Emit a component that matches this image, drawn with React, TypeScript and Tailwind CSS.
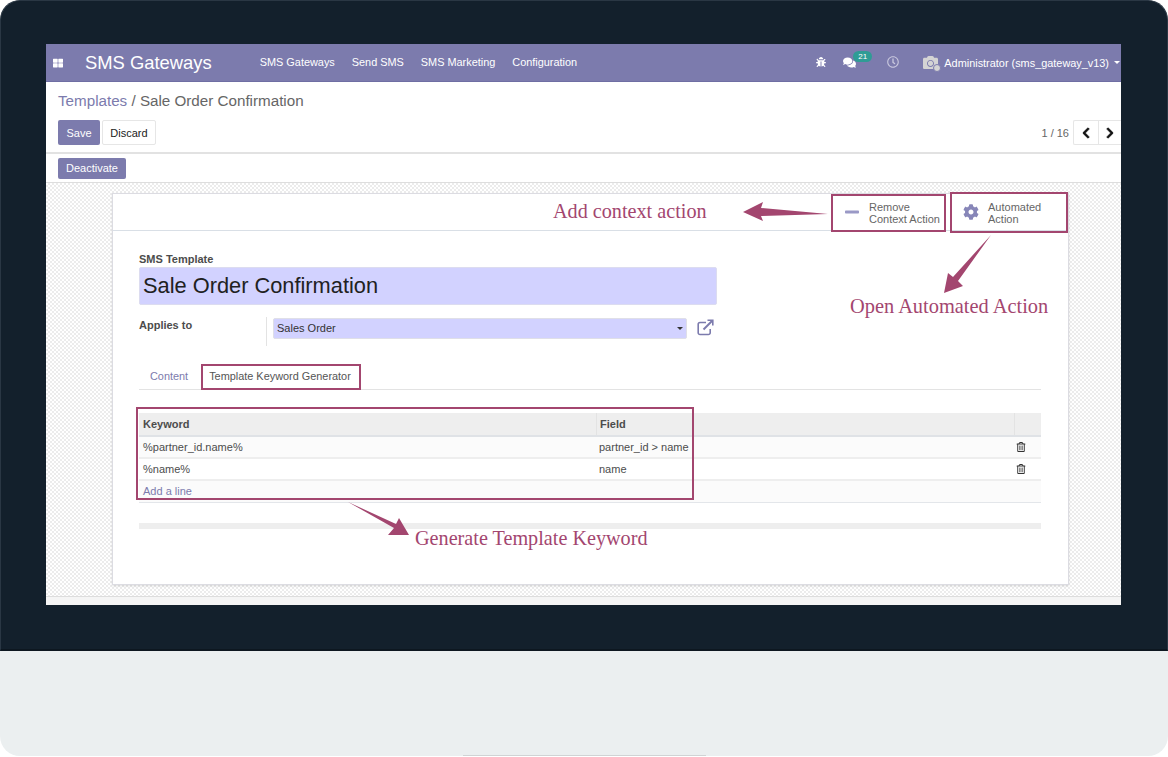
import type { ReactNode } from "react";
import {
  FaBug,
  FaCamera,
  FaChevronLeft,
  FaChevronRight,
  FaCog,
  FaComments,
  FaMinus,
  FaRegClock,
  FaRegTrashAlt,
  FaThLarge,
} from "react-icons/fa";

const menus = ["SMS Gateways", "Send SMS", "SMS Marketing", "Configuration"];

function Navbar() {
  return (
    <header className="flex h-[38px] shrink-0 items-center border-b border-[#6f6ea3] bg-[#7c7bad] text-white">
      <FaThLarge className="ml-[7px] h-[10px] w-[10px]" />
      <span className="ml-[22px] pt-[2px] text-[18.4px] leading-none">SMS Gateways</span>
      <nav className="ml-[48px] flex gap-[17px] text-[10.9px]">
        {menus.map((m) => (
          <span key={m}>{m}</span>
        ))}
      </nav>
      <div className="ml-auto flex items-center">
        <FaBug className="h-[10px] w-[10px]" />
        <div className="relative ml-[17px] mr-[22px]">
          <FaComments className="h-[13px] w-[13px]" />
          <span className="absolute left-[10px] top-[-5px] rounded-full bg-[#2f9c95] px-[5px] text-[8px] leading-[11px]">
            21
          </span>
        </div>
        <FaRegClock className="ml-[9px] h-[12px] w-[12px] text-[#c9c8de]" />
        <div className="relative ml-[23px]">
          <FaCamera className="h-[15px] w-[17px] text-[#d4d4d4]" />
          <span className="absolute bottom-[-2px] right-[-2px] h-[8px] w-[8px] rounded-full border border-[#7c7bad] bg-[#d4d4d4]" />
        </div>
        <span className="ml-[5px] pt-[1px] text-[10.9px]">Administrator (sms_gateway_v13)</span>
        <span className="ml-[5px] mr-[1px] h-0 w-0 border-x-[3px] border-t-[3px] border-x-transparent border-t-white" />
      </div>
    </header>
  );
}

function ControlPanel() {
  return (
    <div className="shrink-0 bg-white">
      <div className="h-[72px] border-b-2 border-[#e2e2e2] pl-[12px]">
        <div className="pt-[9px] text-[15.2px] leading-[20px] text-[#666666]">
          <span className="text-[#7c7bad]">Templates</span> / Sale Order Confirmation
        </div>
        <div className="mt-[9px] flex items-center">
          <button className="h-[25px] w-[42px] rounded-[2px] bg-[#7c7bad] pt-[1px] text-[11px] text-white">Save</button>
          <button className="ml-[2px] h-[25px] w-[54px] rounded-[2px] border border-[#e6e6e6] bg-white pt-[1px] text-[11px] text-[#222222]">
            Discard
          </button>
          <span className="ml-auto pl-[1px] pt-[1px] text-[11px] text-[#666666]">1 / 16</span>
          <div className="ml-[4px] flex h-[25px] rounded-l-[2px] border border-r-0 border-[#e6e6e6]">
            <span className="flex w-[25px] items-center justify-center border-r border-[#e6e6e6]">
              <FaChevronLeft strokeWidth={30} className="h-[12px] w-[12px] text-[#111111]" />
            </span>
            <span className="flex w-[22px] items-center justify-center">
              <FaChevronRight strokeWidth={30} className="h-[12px] w-[12px] text-[#111111]" />
            </span>
          </div>
        </div>
      </div>
      <div className="flex h-[29px] items-center border-b border-[#dddddd] pl-[12px]">
        <button className="h-[21px] w-[68px] rounded-[2px] bg-[#7c7bad] text-[11px] text-white">Deactivate</button>
      </div>
    </div>
  );
}

function SmartButton({ icon, lines, className }: { icon: ReactNode; lines: string[]; className: string }) {
  return (
    <div className={"flex h-full items-center " + className}>
      {icon}
      <div className="pt-[2px] text-[11px] leading-[12.5px] text-[#666666]">
        {lines.map((l) => (
          <div key={l}>{l}</div>
        ))}
      </div>
    </div>
  );
}

const rows = [
  { keyword: "%partner_id.name%", field: "partner_id > name", bg: "bg-[#fbfbfb]" },
  { keyword: "%name%", field: "name", bg: "bg-white" },
];

function KeywordTable() {
  return (
    <div className="mt-[23px] text-[11px] text-[#4c4c4c]">
      <div className="flex h-[24px] items-center border-b-2 border-[#dfe2e6] bg-[#eeeeee] font-bold">
        <span className="w-[458px] self-stretch border-r border-[#e3e3e3] pl-[4px] leading-[22px]">Keyword</span>
        <span className="flex-1 self-stretch pl-[3px] leading-[22px]">Field</span>
        <span className="w-[27px] self-stretch border-l border-[#e3e3e3]" />
      </div>
      {rows.map((r) => (
        <div key={r.keyword} className={"flex h-[22px] items-center border-b-2 border-[#eeeeee] " + r.bg}>
          <span className="w-[460px] pl-[4px]">{r.keyword}</span>
          <span className="flex-1">{r.field}</span>
          <span className="flex w-[27px] pl-[2px]">
            <FaRegTrashAlt className="h-[10px] w-[10px] text-[#333333]" />
          </span>
        </div>
      ))}
      <div className="flex h-[22px] items-center border-b border-[#e3e6ea] bg-[#fbfbfb] pl-[4px] text-[#7c7bad]">
        Add a line
      </div>
      <div className="mt-[20px] h-[6px] bg-[#eeeeee]" />
    </div>
  );
}

function ExternalLink() {
  return (
    <svg className="ml-[10px] mt-[2px] h-[17px] w-[17px] text-[#7c7bad]" viewBox="0 0 17 17" fill="none" stroke="currentColor" strokeWidth="1.6">
      <path d="M9 3.5H3A1.8 1.8 0 0 0 1.2 5.3v8.4A1.8 1.8 0 0 0 3 15.5h8.4a1.8 1.8 0 0 0 1.8-1.8V10" />
      <path d="M6.5 10.5L15 2" strokeWidth="1.9" />
      <path d="M10.5 1.2h5.3v5.3" strokeWidth="1.6" />
    </svg>
  );
}

function Sheet() {
  return (
    <div className="h-[392px] w-[957px] border border-[#dcdce2] bg-white shadow-[0_1px_2px_rgba(0,0,0,0.12)]">
      <div className="flex h-[37px] justify-end border-b border-[#d9dfe6] pr-[3px]">
        <SmartButton
          className="w-[119px] pl-[14px]"
          icon={<FaMinus className="mr-[9px] h-[16px] w-[16px] text-[#9a99c6]" />}
          lines={["Remove", "Context Action"]}
        />
        <SmartButton
          className="w-[116px] pl-[14px]"
          icon={<FaCog className="mr-[9px] h-[16px] w-[16px] text-[#8786b8]" />}
          lines={["Automated", "Action"]}
        />
      </div>
      <div className="pl-[26px] pr-[27px]">
        <div className="pt-[22px] text-[11px] font-bold leading-[13px] text-[#4c4c4c]">SMS Template</div>
        <div className="mt-[1px] flex h-[38px] w-[578px] items-center rounded-[2px] border border-[#dcdcf0] bg-[#d2d2ff] pl-[3px] text-[21.8px] text-[#212121]">
          Sale Order Confirmation
        </div>
        <div className="mt-[12px] flex h-[29px]">
          <span className="w-[127px] pt-[2px] text-[11px] font-bold leading-[13px] text-[#4c4c4c]">Applies to</span>
          <div className="flex border-l border-[#e3e3e3] pl-[6px]">
            <div className="mt-[1px] flex h-[21px] w-[414px] items-center rounded-[2px] border border-[#dfdfe8] bg-[#d2d2ff] pl-[3px] text-[11px] text-[#333333]">
              Sales Order
              <span className="ml-auto mr-[3px] h-0 w-0 border-x-[3px] border-t-[3px] border-x-transparent border-t-[#333333]" />
            </div>
            <ExternalLink />
          </div>
        </div>
        <div className="mt-[17px] flex h-[27px] items-center border-b border-[#e3e3e3] text-[10.9px]">
          <span className="ml-[11px] text-[#7c7bad]">Content</span>
          <span className="ml-[21px] text-[#555555]">Template Keyword Generator</span>
        </div>
        <KeywordTable />
      </div>
    </div>
  );
}

function Annotations() {
  const wine = "#a3466f";
  return (
    <>
      <div className="absolute left-[831px] top-[194px] h-[38px] w-[115px] border-2 border-[#a3466f]" />
      <div className="absolute left-[950px] top-[192px] h-[41px] w-[118px] border-2 border-[#a3466f]" />
      <div className="absolute left-[201px] top-[364px] h-[26px] w-[160px] border-2 border-[#a3466f]" />
      <div className="absolute left-[136px] top-[407px] h-[93px] w-[558px] border-2 border-[#a3466f]" />
      <svg className="absolute left-0 top-0 h-[757px] w-[1168px]" viewBox="0 0 1168 757">
        <path d="M828 214 L761 208 L763 202 L743 212 L763 221 L761 216 Z" fill={wine} />
        <path d="M991 235 L953 277 L948 273 L944 293 L963 286 L958 281 Z" fill={wine} />
        <path d="M348 502 L394 528 L388 535 L409 535 L399 518 L396 524 Z" fill={wine} />
      </svg>
      <span className="absolute left-[553px] top-[199px] font-['Liberation_Serif',serif] text-[20.2px] leading-[24px] text-[#a3466f]">
        Add context action
      </span>
      <span className="absolute left-[850px] top-[294px] font-['Liberation_Serif',serif] text-[20.4px] leading-[24px] text-[#a3466f]">
        Open Automated Action
      </span>
      <span className="absolute left-[415px] top-[526px] font-['Liberation_Serif',serif] text-[20.2px] leading-[24px] text-[#a3466f]">
        Generate Template Keyword
      </span>
    </>
  );
}

export default function App() {
  return (
    <div className="relative h-[757px] w-[1168px] overflow-hidden bg-white font-['Liberation_Sans',Arial,sans-serif]">
      <div className="h-[651px] rounded-t-[20px] border-x border-t border-[#2a3744] border-b-2 border-b-[#0d1720] bg-[#13202c] pl-[45px] pt-[43px]">
        <div className="flex h-[561px] w-[1075px] flex-col bg-white">
          <Navbar />
          <ControlPanel />
          <div className="flex-1 bg-[repeating-conic-gradient(#ececec_0_25%,#ffffff_0_50%)] bg-[length:4px_4px] pl-[66px] pt-[10px]">
            <Sheet />
          </div>
          <div className="h-[9px] shrink-0 border-t border-[#dddddd] bg-[#f5f5f5]" />
        </div>
      </div>
      <div className="relative h-[105px] rounded-b-[20px] bg-[#ebeff0]">
        <div className="absolute bottom-0 left-[463px] h-[1px] w-[243px] bg-[#d0d3d4]" />
      </div>
      <Annotations />
    </div>
  );
}
